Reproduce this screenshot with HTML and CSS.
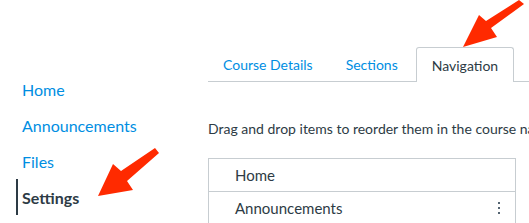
FILE: index.html
```html
<!DOCTYPE html>
<html lang="en">
<head>
    <meta charset="UTF-8">
    <meta name="viewport" content="width=device-width, initial-scale=1.0">
    <title>Course Settings</title>
    <link rel="stylesheet" href="styles.css">
</head>
<body>
    <div class="page">
        <!-- Course navigation -->
        <nav class="course-nav">
            <ul>
                <li><a href="#">Home</a></li>
                <li><a href="#">Announcements</a></li>
                <li><a href="#">Files</a></li>
                <li class="active"><a href="#">Settings</a></li>
            </ul>
        </nav>

        <main class="content">
            <ul class="tabs">
                <li><a href="#">Course Details</a></li>
                <li><a href="#">Sections</a></li>
                <li class="active"><a href="#">Navigation</a></li>
            </ul>

            <p class="hint">Drag and drop items to reorder them in the course navigation.</p>

            <ul class="nav-items">
                <li>Home</li>
                <li>Announcements <span class="kebab"><i></i><i></i><i></i></span></li>
            </ul>
        </main>
    </div>

    <!-- Annotation arrows -->
    <svg class="arrow arrow-top" width="529" height="223" viewBox="0 0 529 223">
        <polygon points="524,4 519,0 486,21 479,15 463,47 497,37 491,28" fill="#ff2a00"/>
    </svg>
    <svg class="arrow arrow-bottom" width="529" height="223" viewBox="0 0 529 223">
        <polygon points="159,153 155,148 121,171 113,164 98,196 133,190 127,181" fill="#ff2a00"/>
    </svg>
</body>
</html>
```

FILE: styles.css
```css
/* Basic page styles */
body {
    margin: 0;
    background-color: #fff;
    font-family: Lato, "Open Sans", sans-serif;
    color: #2d3b45;
    overflow: hidden;
}

ul {
    list-style-type: none;
    margin: 0;
    padding: 0;
}

a {
    text-decoration: none;
    color: #008ee2;
}

.page {
    display: flex;
    height: 223px;
}

/* Left course navigation */
.course-nav {
    flex: 0 0 192px;
    padding: 71px 0 0 16px;
}

.course-nav li {
    height: 36px;
    display: flex;
    align-items: center;
    border-left: 2px solid transparent;
    padding-left: 4px;
    font-size: 16px;
}

.course-nav li.active {
    border-left-color: #2d3b45;
}

.course-nav li.active a {
    color: #2d3b45;
    font-weight: bold;
}

/* Main content */
.content {
    flex: 1;
    min-width: 0;
    padding-top: 47px;
    white-space: nowrap;
    overflow: hidden;
}

.tabs {
    display: flex;
    gap: 1px;
    border-bottom: 1px solid #c7cdd1;
    height: 34px;
}

.tabs li {
    display: flex;
    align-items: center;
    padding: 0 15px;
    font-size: 14px;
    border: 1px solid transparent;
    border-bottom: none;
    border-radius: 3px 3px 0 0;
}

.tabs li:first-child {
    margin-left: -1px;
}

.tabs li.active {
    border-color: #c7cdd1;
    background-color: #fff;
    height: 34px;
    margin-left: 1px;
}

.tabs li.active a {
    color: #2d3b45;
}

.hint {
    margin: 0;
    padding: 39px 0 0 0;
    font-size: 14px;
    line-height: 16px;
    overflow: hidden;
}

.nav-items {
    margin-top: 21px;
    width: 306px;
    border: 1px solid #c7cdd1;
}

.nav-items li {
    height: 32px;
    display: flex;
    align-items: center;
    justify-content: space-between;
    padding: 0 15px 0 26px;
    font-size: 15px;
}

.nav-items li + li {
    border-top: 1px solid #c7cdd1;
}

.kebab {
    display: flex;
    flex-direction: column;
    gap: 3px;
}

.kebab i {
    display: block;
    width: 2px;
    height: 2px;
    background-color: #556572;
}

/* Annotation overlay */
.arrow {
    position: absolute;
    top: 0;
    left: 0;
    pointer-events: none;
}
```
